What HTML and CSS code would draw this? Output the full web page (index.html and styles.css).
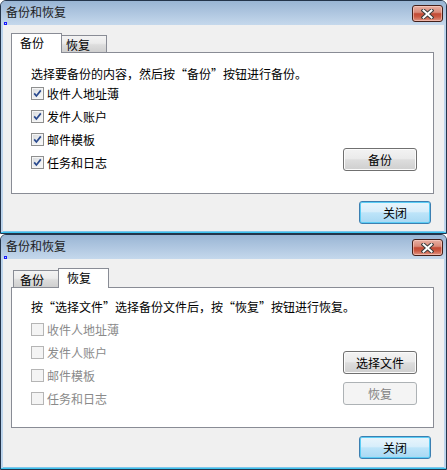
FILE: index.html
```html
<!DOCTYPE html>
<html lang="zh-CN">
<head>
<meta charset="utf-8">
<title>备份和恢复</title>
<link rel="stylesheet" href="styles.css">
</head>
<body>
<div class="window w1">
  <div class="titlebar">
    <span class="title">备份和恢复</span>
    <button class="xbtn"><svg width="13" height="10" viewBox="0 0 13 10"><path d="M2.5 1.5 L10.5 8.5 M10.5 1.5 L2.5 8.5" stroke="#3b3b3b" stroke-width="4" stroke-linecap="square"/><path d="M2.5 1.5 L10.5 8.5 M10.5 1.5 L2.5 8.5" stroke="#fff" stroke-width="2" stroke-linecap="square"/></svg></button>
  </div>
  <i class="marker"></i>
  <div class="client">
    <div class="tabs">
      <div class="tab active first">备份</div>
      <div class="tab">恢复</div>
    </div>
    <div class="panel p1">
      <div class="intro">选择要备份的内容，然后按“备份”按钮进行备份。</div>
      <div class="body">
        <ul class="checks">
          <li><span class="cb"><svg width="9" height="9" viewBox="0 0 9 9"><path d="M1.2 4.4 L3.4 7 L7.8 1.4" fill="none" stroke="#2a4a8e" stroke-width="1.7"/></svg></span>收件人地址薄</li>
          <li><span class="cb"><svg width="9" height="9" viewBox="0 0 9 9"><path d="M1.2 4.4 L3.4 7 L7.8 1.4" fill="none" stroke="#2a4a8e" stroke-width="1.7"/></svg></span>发件人账户</li>
          <li><span class="cb"><svg width="9" height="9" viewBox="0 0 9 9"><path d="M1.2 4.4 L3.4 7 L7.8 1.4" fill="none" stroke="#2a4a8e" stroke-width="1.7"/></svg></span>邮件模板</li>
          <li><span class="cb"><svg width="9" height="9" viewBox="0 0 9 9"><path d="M1.2 4.4 L3.4 7 L7.8 1.4" fill="none" stroke="#2a4a8e" stroke-width="1.7"/></svg></span>任务和日志</li>
        </ul>
        <div class="actions a1"><button class="btn">备份</button></div>
      </div>
    </div>
    <div class="footer f1"><button class="btn default">关闭</button></div>
  </div>
</div>

<div class="window w2">
  <div class="titlebar">
    <span class="title">备份和恢复</span>
    <button class="xbtn"><svg width="13" height="10" viewBox="0 0 13 10"><path d="M2.5 1.5 L10.5 8.5 M10.5 1.5 L2.5 8.5" stroke="#3b3b3b" stroke-width="4" stroke-linecap="square"/><path d="M2.5 1.5 L10.5 8.5 M10.5 1.5 L2.5 8.5" stroke="#fff" stroke-width="2" stroke-linecap="square"/></svg></button>
  </div>
  <i class="marker"></i>
  <div class="client c2">
    <div class="tabs">
      <div class="tab first">备份</div>
      <div class="tab active">恢复</div>
    </div>
    <div class="panel p2">
      <div class="intro">按“选择文件”选择备份文件后，按“恢复”按钮进行恢复。</div>
      <div class="body">
        <ul class="checks disabled">
          <li><span class="cb"></span>收件人地址薄</li>
          <li><span class="cb"></span>发件人账户</li>
          <li><span class="cb"></span>邮件模板</li>
          <li><span class="cb"></span>任务和日志</li>
        </ul>
        <div class="actions a2">
          <button class="btn">选择文件</button>
          <button class="btn" disabled>恢复</button>
        </div>
      </div>
    </div>
    <div class="footer f2"><button class="btn default">关闭</button></div>
  </div>
</div>
</body>
</html>
```
FILE: styles.css
```css
html, body {
  margin: 0;
  padding: 0;
  background: #ffffff;
}
body {
  width: 447px;
  font-family: "Noto Sans CJK SC", "Noto Sans", sans-serif;
  font-size: 12px;
  color: #000;
}

.window {
  position: relative;
  box-sizing: border-box;
  width: 447px;
  border: 1px solid #23344a;
  border-radius: 6px 6px 0 0;
  background: #bcd4ec;
  padding: 0 2px 2px;
  display: flex;
  flex-direction: column;
  box-shadow: inset 0 -1px 0 #3cc3ee;
}
.w1 { height: 234px; }
.w2 { height: 236px; }

.titlebar {
  height: 24px;
  margin: 0 -2px;
  padding: 0 3px 0 5px;
  display: flex;
  justify-content: space-between;
  align-items: flex-start;
  background: linear-gradient(#99b5d4, #c5d8ec);
  border-radius: 5px 5px 0 0;
}
.title {
  line-height: 22px;
  color: #1b1b1b;
}

.xbtn {
  box-sizing: border-box;
  width: 31px;
  height: 17px;
  margin-top: 4px;
  padding: 0;
  border: 1px solid #43201a;
  border-radius: 3px;
  background: linear-gradient(#e8b0a3 0%, #d98a79 42%, #c24a35 52%, #cb5a43 72%, #e09584 100%);
  box-shadow: inset 0 0 0 1px rgba(255, 215, 205, 0.55);
  display: flex;
  align-items: center;
  justify-content: center;
}
.xbtn svg { display: block; }

.marker {
  position: absolute;
  left: 3px;
  top: 21px;
  width: 3px;
  height: 3px;
  box-sizing: border-box;
  border: 1px solid #1a1aff;
}

.client {
  flex: 1;
  background: #f0f0f0;
  padding: 8px 10px 0 8px;
  display: flex;
  flex-direction: column;
  box-shadow: 0 1px 0 #7fc6ea;
}
.client.c2 { padding-top: 9px; }

.tabs {
  height: 19px;
  display: flex;
  align-items: flex-end;
  padding-left: 2px;
}
.tab {
  box-sizing: border-box;
  width: 47px;
  height: 17px;
  border: 1px solid #898c95;
  border-bottom: none;
  border-left: none;
  background: linear-gradient(#f3f3f3 0%, #ebebeb 45%, #dddddd 55%, #cfcfcf 100%);
  padding-left: 6px;
  line-height: 17px;
  color: #000;
}
.tab.first { border-left: 1px solid #898c95; }
.tab.active {
  position: relative;
  z-index: 2;
  width: 51px;
  height: 20px;
  margin: 0 -2px -1px;
  background: #ffffff;
  border-left: 1px solid #898c95;
  padding-left: 8px;
  line-height: 17px;
}

.panel {
  box-sizing: border-box;
  border: 1px solid #898c95;
  background: #ffffff;
  padding-left: 19px;
  display: flex;
  flex-direction: column;
}
.p1 { height: 142px; padding-top: 13px; padding-right: 16px; }
.p2 { height: 141px; padding-top: 11px; padding-right: 16px; }

.intro {
  line-height: 16px;
  white-space: nowrap;
}

.body {
  display: flex;
  justify-content: space-between;
}
.p2 .body { margin-top: 3px; }

.checks {
  list-style: none;
  margin: 0;
  padding: 0;
}
.checks li {
  height: 23px;
  display: flex;
  align-items: center;
}
.cb {
  box-sizing: border-box;
  width: 13px;
  height: 13px;
  margin-right: 3px;
  border: 1px solid #8e8f8f;
  background: linear-gradient(135deg, #d6d8da 0%, #eef0f1 60%, #fafafa 100%);
  box-shadow: inset 0 0 0 1px #f5f5f5;
  display: flex;
  align-items: center;
  justify-content: center;
}
.cb svg { display: block; }
.checks.disabled li { color: #8a8a8a; }
.checks.disabled .cb {
  border-color: #b5b5b5;
  background: #f4f4f4;
  box-shadow: none;
}

.actions {
  display: flex;
  flex-direction: column;
  justify-content: flex-end;
  gap: 8px;
}
.a1 { padding-bottom: 3px; }
.a2 { padding-bottom: 5px; }

.btn {
  box-sizing: border-box;
  width: 74px;
  height: 23px;
  padding: 0;
  border: 1px solid #707070;
  border-radius: 3px;
  background: linear-gradient(#f3f3f3 0%, #ebebeb 45%, #dddddd 52%, #cfcfcf 100%);
  box-shadow: inset 0 0 0 1px #fbfbfb;
  font-family: inherit;
  font-size: 12px;
  line-height: 20px;
  color: #000;
}
.btn:disabled {
  border-color: #adb2b5;
  background: #f4f4f4;
  box-shadow: none;
  color: #838383;
}
.btn.default {
  width: 72px;
  border-color: #3c7fb1;
  background: linear-gradient(#e9f5fc 0%, #d8eefb 45%, #bde4f9 52%, #a8d8f3 100%);
  box-shadow: inset 0 0 0 1px #5bcdf5;
}

.footer {
  display: flex;
  justify-content: flex-end;
  padding-right: 3px;
}
.f1 { margin-top: 7px; }
.f2 { margin-top: 8px; }
```
